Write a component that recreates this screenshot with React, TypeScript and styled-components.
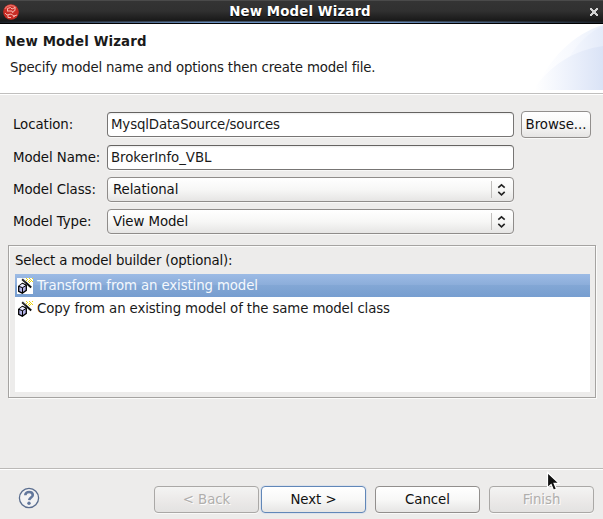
import React from 'react';
import styled, { createGlobalStyle, css } from 'styled-components';

const GlobalStyle = createGlobalStyle`
  html, body { margin: 0; padding: 0; overflow: hidden; }
  * { box-sizing: border-box; }
`;

const Window = styled.main`
  position: relative;
  display: flex;
  flex-direction: column;
  width: 603px;
  height: 519px;
  background: #edeceb;
  color: #1a1a1a;
  font-family: 'DejaVu Sans', sans-serif;
  font-size: 13.33px;
  line-height: 16px;
  white-space: nowrap;
  overflow: hidden;
`;

const TitleBar = styled.header`
  display: grid;
  grid-template-columns: 27px 1fr 30px;
  height: 24px;
  flex: none;
  padding-top: 1px;
  background:
    linear-gradient(#000, #000) 0 23px / 100% 1px no-repeat,
    linear-gradient(90deg, #1c2229, #6a8fc0 35%, #6a8fc0 65%, #1c2229) 0 22px / 100% 1px no-repeat,
    linear-gradient(90deg, #191b1e, #46566b 35%, #46566b 65%, #191b1e) 0 21px / 100% 1px no-repeat,
    linear-gradient(#4a4a4a 0 1px, #343434 1px, #303030 11px, #181818 21px);
`;

const TitleText = styled.h1`
  margin: 3px 0 0;
  color: #fff;
  font-size: 13.33px;
  line-height: 16px;
  letter-spacing: 0.13px;
  text-align: center;
  text-shadow: 0 1px 1px #000;
`;

const AppIcon = styled.svg`
  width: 16px;
  height: 16px;
  margin: 3px 0 0 3px;
`;

const CloseIcon = styled.svg`
  width: 8px;
  height: 8px;
  margin: 7px 0 0 17px;
`;

const Banner = styled.section`
  display: flex;
  justify-content: space-between;
  height: 71px;
  flex: none;
  background: #fff;
  border-bottom: 1px solid #fff;
  box-shadow: inset 0 -1px #c0bfbe;
`;

const BannerText = styled.div`
  padding: 10px 0 0 5px;
`;

const BannerTitle = styled.h2`
  margin: 0 0 10px;
  font-size: 13.33px;
  line-height: 16px;
  letter-spacing: 0.13px;
`;

const BannerHint = styled.p`
  margin: 0 0 0 5px;
  letter-spacing: -0.17px;
`;

const Swoosh = styled.svg`
  width: 80px;
  height: 66px;
`;

const Form = styled.form`
  display: grid;
  grid-template-columns: 94px 407px 70px;
  grid-template-rows: 27px 25px 25px 25px;
  row-gap: 7px;
  padding: 16px 0 0 13px;
  align-items: center;
  height: 150px;
  flex: none;
`;

const Label = styled.label`
  grid-column: 1;
  color: #111;
  letter-spacing: -0.08px;
`;

const fieldFrame = css`
  height: 25px;
  border-radius: 4px;
  box-shadow: 0 1px #f8f8f7;
  letter-spacing: -0.08px;
`;

const TextField = styled.input<{ $tracking?: number }>`
  ${fieldFrame}
  width: 407px;
  padding: 0 3px 1px;
  border: 1px solid #777574;
  border-top-color: #656361;
  outline: none;
  background: linear-gradient(#ececec, #fff 2px);
  color: #1a1a1a;
  font: inherit;
  letter-spacing: ${({ $tracking = 0 }) => $tracking}px;
`;

const Combo = styled.div`
  ${fieldFrame}
  display: flex;
  align-items: center;
  padding: 0 5px;
  border: 1px solid #8f8c8a;
  background: linear-gradient(#fff, #f7f7f6 50%, #e6e5e4);
  color: #111;
`;

const ComboDivider = styled.i`
  width: 1px;
  height: 17px;
  margin: 0 2px 0 auto;
  background: #c0bebc;
`;

const ComboArrows = styled.svg`
  width: 14px;
  height: 17px;
`;

type Tone = 'normal' | 'primary' | 'disabled';

const tones = {
  normal: css`
    border-color: #928f8d;
    background: linear-gradient(#fff, #f8f8f7 50%, #e6e5e4);
    color: #111;
  `,
  primary: css`
    border-color: #6187b8;
    background: linear-gradient(#fff, #f8f8f7 50%, #e6e5e4);
    color: #111;
    box-shadow: 0 0 0 1px #dce2eb;
  `,
  disabled: css`
    border-color: #aaa8a6;
    background: linear-gradient(#f4f4f3, #eceae9 50%, #e3e2e1);
    color: #b0aeac;
    text-shadow: 1px 1px #fff;
  `,
};

const Button = styled.button<{ $tone?: Tone }>`
  height: 27px;
  padding: 1px 0 0;
  border: 1px solid;
  border-radius: 4px;
  font: inherit;
  letter-spacing: -0.05px;
  text-align: center;
  box-shadow: 0 1px #f9f9f8;
  ${({ $tone = 'normal' }) => tones[$tone]}
`;

const BrowseButton = styled(Button)`
  margin-left: 7px;
  width: 70px;
`;

const Group = styled.section`
  width: 588px;
  height: 153px;
  flex: none;
  margin-left: 8px;
  padding: 6px 5px 5px 6px;
  border: 1px solid #a5a3a1;
  box-shadow: inset 1px 1px #fbfbfa, 1px 1px #fbfbfa;
`;

const GroupTitle = styled.h3`
  margin: 0;
  padding-top: 1px;
  height: 22px;
  color: #111;
  font-weight: normal;
  font-size: 13.33px;
  line-height: 16px;
  letter-spacing: -0.17px;
`;

const List = styled.ul`
  margin: 0;
  padding: 0;
  height: 118px;
  background: #fff;
  list-style: none;
`;

const ListItem = styled.li<{ $selected?: boolean }>`
  display: flex;
  align-items: center;
  gap: 4px;
  height: 23px;
  padding: 0 2px;
  letter-spacing: -0.12px;
  ${({ $selected }) =>
    $selected &&
    css`
      color: #f4f8fd;
      background: linear-gradient(#9cbbe5, #8cadda 11px, #83a7d5 11px, #779ed0);
    `}
`;

const BuilderIcon = styled.svg`
  width: 16px;
  height: 16px;
  background: #fff;
`;

const Footer = styled.footer`
  display: flex;
  justify-content: space-between;
  height: 51px;
  flex: none;
  margin-top: auto;
  padding: 17px 9px 0 18px;
  border-top: 1px solid #bbb9b7;
  box-shadow: inset 0 1px #fff;
`;

const HelpIcon = styled.svg`
  width: 22px;
  height: 22px;
  margin-top: 1px;
`;

const Navigation = styled.nav`
  display: flex;
  column-gap: 9px;
`;

const ButtonPair = styled.div<{ $gap: number }>`
  display: grid;
  grid-template-columns: 105px 105px;
  column-gap: ${({ $gap }) => $gap}px;
`;

const Pointer = styled.svg`
  position: absolute;
  left: 546px;
  top: 471px;
  width: 14px;
  height: 21px;
`;

const ModelBuilderIcon = () => (
  <BuilderIcon viewBox="0 0 16 16">
    <path d="M5.3 5.4 9.3 7.2v5.1l-4 2.9-3.6-1.8V8.2z" fill="#b3b3e6" stroke="#000" strokeWidth="1.3" />
    <path d="M5.3 5.8 8.6 7.4 5.5 9.2 2.3 8.1z" fill="#e9e9fb" />
    <path d="M2 8.4l3.5 1.3L9 7.5M5.5 9.7V15" fill="none" stroke="#000" strokeWidth="1" />
    <path d="M5.2 1.2 14.2 9.4" stroke="#111" strokeWidth="2" />
    <path d="M5.8 1.2 8.6 3.8" stroke="#777" strokeWidth="0.8" />
    <path
      d="M9 0h1v1H9zM12 0h1v1h-1zM15 0h1v1h-1zM10 1h1v1h-1zM13 1h1v1h-1zM9 2h1v1H9zM12 2h1v1h-1zM14 2h1v1h-1zM11 3h1v1h-1zM13 3h1v1h-1zM15 3h1v1h-1zM12 4h1v1h-1z"
      fill="#ecd40c"
      shapeRendering="crispEdges"
    />
  </BuilderIcon>
);

const Arrows = () => (
  <ComboArrows viewBox="0 0 14 17">
    <path d="M4.3 6.7 7.5 3.8l3.2 2.9M4.3 10.9 7.5 13.8l3.2-2.9" fill="none" stroke="#222" strokeWidth="1.6" />
  </ComboArrows>
);

export default function App() {
  return (
    <>
      <GlobalStyle />
      <Window>
        <TitleBar>
          <AppIcon viewBox="0 0 16 16">
            <circle cx="8" cy="8" r="7.8" fill="#c92d25" />
            <path d="M2 5c2-4 8-5 11-1" fill="none" stroke="#e86b62" strokeWidth="1.4" />
            <path d="M4.5 7.5V4.5l3-1 1.5 1.5 3-1.5v3l-2 1M5 7h4l1 2M2 9l2 2 4-1 3 2 3-1M5 11v2.5h3M10 13l2-1" fill="none" stroke="#fbc4bd" strokeWidth="0.9" />
          </AppIcon>
          <TitleText>New Model Wizard</TitleText>
          <CloseIcon viewBox="0 0 8 8" shapeRendering="crispEdges">
            <path d="M0 0h2v1h1v1h2V1h1V0h2v2H7v1H6v2h1v1h1v2H6V7H5V6H3v1H2v1H0V6h1V5h1V3H1V2H0z" fill="#d2d2d2" />
          </CloseIcon>
        </TitleBar>
        <Banner>
          <BannerText>
            <BannerTitle>New Model Wizard</BannerTitle>
            <BannerHint>Specify model name and options then create model file.</BannerHint>
          </BannerText>
          <Swoosh viewBox="0 0 80 66">
            <defs>
              <linearGradient id="wash" gradientUnits="userSpaceOnUse" x1="10" x2="80" y1="0" y2="0">
                <stop offset="0.1" stopColor="#fff" />
                <stop offset="0.55" stopColor="#f7f9fe" />
                <stop offset="1" stopColor="#eaf0fb" />
              </linearGradient>
              <linearGradient id="ridge" gradientUnits="userSpaceOnUse" x1="40" x2="80" y1="0" y2="0">
                <stop offset="0" stopColor="#f8faff" />
                <stop offset="1" stopColor="#e4ebf9" />
              </linearGradient>
              <linearGradient id="wave" gradientUnits="userSpaceOnUse" x1="12" x2="80" y1="0" y2="0">
                <stop offset="0" stopColor="#fff" />
                <stop offset="0.45" stopColor="#eff3fc" />
                <stop offset="1" stopColor="#dae3f6" />
              </linearGradient>
            </defs>
            <path d="M12 66C26 35 50 10 80 1V66z" fill="url(#wash)" />
            <path d="M45 35C54 20 66 8 80 2V66H45z" fill="url(#ridge)" />
            <path d="M10 66C27 41 51 26 80 22V66z" fill="url(#wave)" />
          </Swoosh>
        </Banner>
        <Form>
          <Label>Location:</Label>
          <TextField defaultValue="MysqlDataSource/sources" $tracking={-0.13} />
          <BrowseButton type="button">Browse...</BrowseButton>
          <Label>Model Name:</Label>
          <TextField defaultValue="BrokerInfo_VBL" $tracking={-0.04} />
          <Label>Model Class:</Label>
          <Combo>Relational<ComboDivider /><Arrows /></Combo>
          <Label>Model Type:</Label>
          <Combo>View Model<ComboDivider /><Arrows /></Combo>
        </Form>
        <Group>
          <GroupTitle>Select a model builder (optional):</GroupTitle>
          <List>
            <ListItem $selected><ModelBuilderIcon />Transform from an existing model</ListItem>
            <ListItem><ModelBuilderIcon />Copy from an existing model of the same model class</ListItem>
          </List>
        </Group>
        <Footer>
          <HelpIcon viewBox="0 0 22 22">
            <circle cx="11" cy="11" r="9.6" fill="#f2f2f3" stroke="#5a6d8e" strokeWidth="1.3" />
            <path d="M7.3 8.2C7.3 3.8 14.8 4 14.8 8c0 2.5-3.3 2.6-3.6 5.2" fill="none" stroke="#62779c" strokeWidth="2.6" />
            <circle cx="11" cy="16.3" r="1.7" fill="#62779c" />
          </HelpIcon>
          <Navigation>
            <ButtonPair $gap={2}>
              <Button $tone="disabled">&lt; Back</Button>
              <Button $tone="primary">Next &gt;</Button>
            </ButtonPair>
            <ButtonPair $gap={9}>
              <Button>Cancel</Button>
              <Button $tone="disabled">Finish</Button>
            </ButtonPair>
          </Navigation>
        </Footer>
        <Pointer viewBox="0 0 14 21">
          <path d="M1.5 1.5v15.2l3.6-3.3 2.4 5.8 3-1.3-2.4-5.5h5z" fill="#111" stroke="#fff" strokeWidth="1.2" />
        </Pointer>
      </Window>
    </>
  );
}
